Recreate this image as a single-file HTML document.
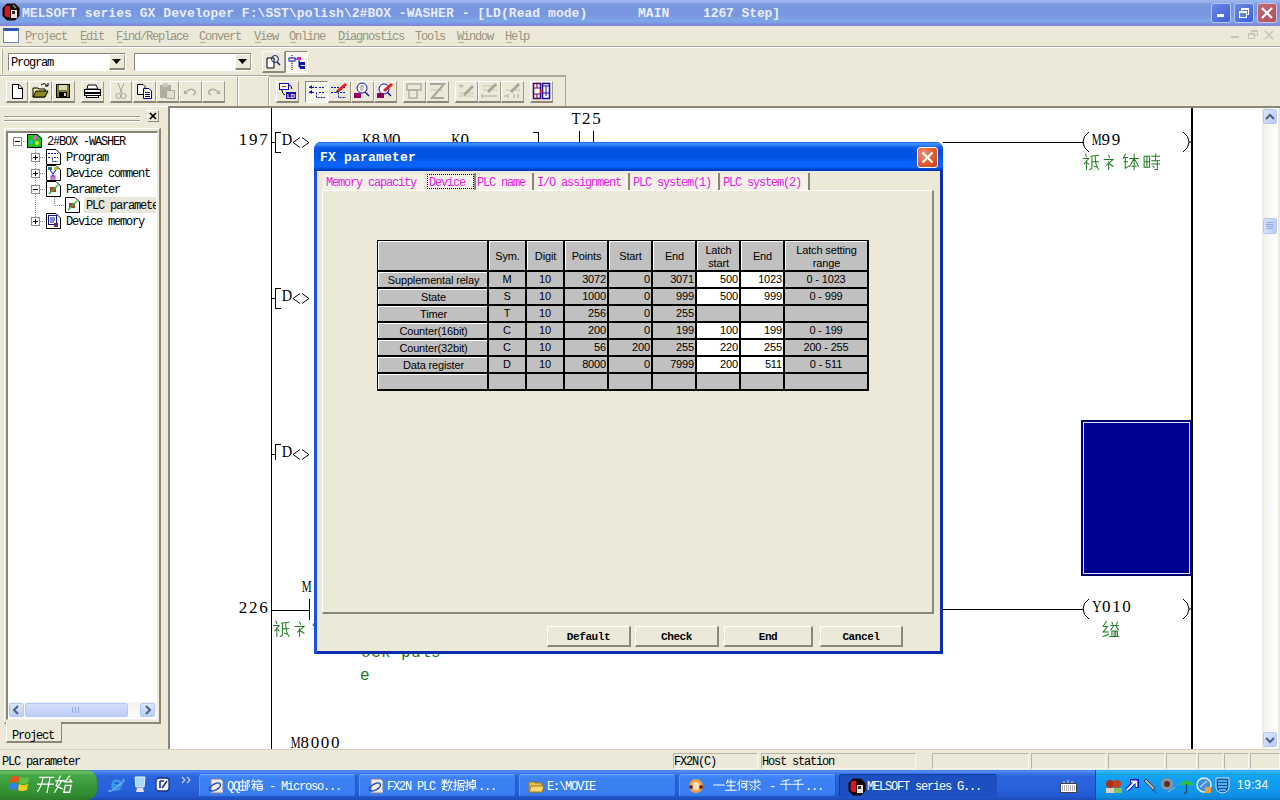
<!DOCTYPE html>
<html><head><meta charset="utf-8">
<style>
*{margin:0;padding:0;box-sizing:border-box}
html,body{width:1280px;height:800px;overflow:hidden;background:#ECE9D8;font-family:"Liberation Sans",sans-serif;position:relative}
div,span,svg{position:absolute}
.mono{font-family:"Liberation Mono",monospace;white-space:pre}
.ser{font-family:"Liberation Serif",serif;white-space:pre}
.tb{border-top:1px solid #FFFFFF;border-left:1px solid #FFFFFF;border-right:1px solid #9D9A8B;border-bottom:2px solid #8A8778;background:#ECE9D8}
.sunk{border-top:1px solid #8A8778;border-left:1px solid #8A8778;border-right:1px solid #fff;border-bottom:1px solid #fff}
.mi{top:30px;font-size:12px;color:#97947F;letter-spacing:-1.2px}
.gl{background:#000}
.grn{color:#1F7A1F}
</style></head><body>

<!-- TITLE BAR -->
<div style="left:0;top:0;width:1280px;height:26px;background:linear-gradient(#9AB5EF 0,#98B3EE 2px,#7E9CDD 4px,#7896DF 7px,#7A96E0 15px,#7BA0E4 18px,#7AA8E8 21px,#7C9AE4 23px,#7E88DA 25px,#7E86D8 26px)"></div>
<svg style="left:2px;top:3px" width="18" height="18"><path d="M5 0.5H13L17.5 5V13L13 17.5H5L0.5 13V5Z" fill="#1A0808"/><path d="M3 4Q5 2 8 3V14Q4 15 2.5 12Z" fill="#D81818"/><path d="M9 7H15V15H9Z" fill="#E8E0D8"/><path d="M10 8H13V11H10Z" fill="#402828"/><path d="M11 2L14 5" stroke="#60A060" stroke-width="1.5"/></svg>
<span class="mono" style="left:22px;top:6px;font-size:13px;font-weight:bold;color:#E8EEFA;letter-spacing:0.05px">MELSOFT series GX Developer F:\SST\polish\2#BOX -WASHER - [LD(Read mode)</span>
<span class="mono" style="left:638px;top:6px;font-size:13px;font-weight:bold;color:#E8EEFA;letter-spacing:0.05px">MAIN</span>
<span class="mono" style="left:703px;top:6px;font-size:13px;font-weight:bold;color:#E8EEFA;letter-spacing:-0.1px">1267 Step]</span>
<!-- title buttons -->
<div style="left:1211px;top:3px;width:20px;height:20px;border-radius:3px;border:1px solid #B4C6F2;background:linear-gradient(135deg,#6A88E6,#3E60D8)"></div>
<div style="left:1217px;top:14px;width:7px;height:3px;background:#fff"></div>
<div style="left:1234px;top:3px;width:20px;height:20px;border-radius:3px;border:1px solid #B4C6F2;background:linear-gradient(135deg,#6A88E6,#3E60D8)"></div>
<div style="left:1241px;top:8px;width:8px;height:7px;border:1px solid #fff;border-top-width:2px"></div>
<div style="left:1239px;top:11px;width:8px;height:7px;border:1px solid #fff;border-top-width:2px;background:#5F85DF"></div>
<div style="left:1257px;top:3px;width:20px;height:20px;border-radius:3px;border:1px solid #D8C0D8;background:linear-gradient(135deg,#C06A78,#B05060)"></div>
<svg style="left:1257px;top:3px" width="20" height="20"><path d="M5 5L15 15M15 5L5 15" stroke="#fff" stroke-width="2.2"/></svg>

<!-- MENU BAR -->
<div style="left:3px;top:28px;width:16px;height:15px;border:1px solid #6D83B8;border-top:3px solid #2E55B5;background:#fff"></div>
<span class="mono mi" style="left:25px">Project</span>
<span class="mono mi" style="left:80px">Edit</span>
<span class="mono mi" style="left:116px">Find/Replace</span>
<span class="mono mi" style="left:199px">Convert</span>
<span class="mono mi" style="left:254px">View</span>
<span class="mono mi" style="left:289px">Online</span>
<span class="mono mi" style="left:338px">Diagnostics</span>
<span class="mono mi" style="left:415px">Tools</span>
<span class="mono mi" style="left:457px">Window</span>
<span class="mono mi" style="left:505px">Help</span>
<div style="left:26px;top:42px;width:6px;height:1px;background:#B5B2A0"></div>
<div style="left:81px;top:42px;width:6px;height:1px;background:#B5B2A0"></div>
<div style="left:117px;top:42px;width:6px;height:1px;background:#B5B2A0"></div>
<div style="left:200px;top:42px;width:6px;height:1px;background:#B5B2A0"></div>
<div style="left:255px;top:42px;width:6px;height:1px;background:#B5B2A0"></div>
<div style="left:290px;top:42px;width:6px;height:1px;background:#B5B2A0"></div>
<div style="left:339px;top:42px;width:6px;height:1px;background:#B5B2A0"></div>
<div style="left:416px;top:42px;width:6px;height:1px;background:#B5B2A0"></div>
<div style="left:458px;top:42px;width:6px;height:1px;background:#B5B2A0"></div>
<div style="left:506px;top:42px;width:6px;height:1px;background:#B5B2A0"></div>
<!-- mdi buttons -->
<div style="left:1231px;top:36px;width:8px;height:2px;background:#C9C6B8"></div>
<div style="left:1251px;top:30px;width:7px;height:6px;border:1px solid #C9C6B8;border-top-width:2px"></div><div style="left:1248px;top:33px;width:7px;height:6px;border:1px solid #C9C6B8;border-top-width:2px;background:#ECE9D8"></div>
<svg style="left:1264px;top:30px" width="10" height="10"><path d="M1 1L9 9M9 1L1 9" stroke="#C9C6B8" stroke-width="1.6"/></svg>
<div style="left:0;top:46px;width:1280px;height:1px;background:#ACA899"></div>
<div style="left:0;top:47px;width:1280px;height:1px;background:#fff"></div>

<!-- TOOLBAR ROW 1 -->
<div style="left:1px;top:49px;width:2px;height:25px;border-left:1px solid #fff;border-right:1px solid #ACA899"></div>
<div class="sunk" style="left:8px;top:53px;width:118px;height:18px;background:#fff"></div>
<span class="mono" style="left:11px;top:56px;font-size:12px;letter-spacing:-1.2px;color:#000">Program</span>
<div class="tb" style="left:109px;top:54px;width:16px;height:16px"></div>
<svg style="left:112px;top:59px" width="10" height="6"><path d="M0 0H9L4.5 5Z" fill="#000"/></svg>
<div class="sunk" style="left:134px;top:53px;width:118px;height:18px;background:#fff"></div>
<div class="tb" style="left:235px;top:54px;width:16px;height:16px"></div>
<svg style="left:238px;top:59px" width="10" height="6"><path d="M0 0H9L4.5 5Z" fill="#000"/></svg>
<div class="tb" style="left:262px;top:51px;width:23px;height:22px"></div>
<svg style="left:264px;top:53px" width="19" height="18"><path d="M3 5H10V15H3Z" fill="#fff" stroke="#000"/><circle cx="11" cy="6" r="3.5" fill="none" stroke="#1a1a80"/><path d="M13 9L16 12" stroke="#1a1a80" stroke-width="1.5"/></svg>
<div style="left:285px;top:51px;width:23px;height:22px;border-top:1px solid #8A8778;border-left:1px solid #8A8778;border-right:1px solid #fff;border-bottom:1px solid #fff;background:#F6F5EE"></div>
<svg style="left:287px;top:53px" width="19" height="18"><path d="M5 2V17" stroke="#000" stroke-dasharray="1 1"/><rect x="2" y="5" width="6" height="3" fill="#fff" stroke="#1010C0"/><rect x="10" y="4" width="4" height="3" fill="#E020C0"/><path d="M8 6H10M12 7V14H14" stroke="#1010C0"/><rect x="13" y="9" width="5" height="3" fill="#1010C0"/><rect x="13" y="13" width="5" height="3" fill="#1010C0"/></svg>
<div style="left:0;top:75px;width:566px;height:1px;background:#ACA899"></div>
<div style="left:0;top:76px;width:566px;height:1px;background:#fff"></div>
<style>
.tab{top:176px;font-size:12px;letter-spacing:-1.2px;color:#E41EE4}
.dbtn{border-top:1px solid #fff;border-left:1px solid #fff;border-right:2px solid #8A8778;border-bottom:2px solid #8A8778;background:#ECE9D8;font-family:"Liberation Mono",monospace;font-size:11px;font-weight:bold;letter-spacing:-0.4px;text-align:center;line-height:20px;color:#000}
.cell{position:absolute;font-size:11px;line-height:15px;color:#000;white-space:nowrap;letter-spacing:-0.15px}
</style>
<style>
.sp{top:753px;height:16px;border-top:1px solid #B8B5A6;border-left:1px solid #B8B5A6;border-right:1px solid #F8F7F2;border-bottom:1px solid #F8F7F2}
.tbtn{top:774px;width:157px;height:23px;border-radius:3px;background:linear-gradient(#4A8EF8 0,#3C82F4 3px,#3A7EF2 18px,#3372E6 23px);border-top:1px solid #6AA2FA;border-left:1px solid #5A96F6;border-right:1px solid #2058C8;border-bottom:1px solid #2058C8}
.tt{top:780px;font-size:12px;color:#fff;letter-spacing:-1.2px}
</style>
<style>.lt{font-family:"Liberation Serif",serif;font-size:17px;letter-spacing:1.5px;white-space:pre;color:#000;line-height:17px}</style>
<style>.tr{font-size:12px;letter-spacing:-1.2px;color:#000}</style>
<style>.lc{width:10.2px;text-align:center;font-family:"Liberation Serif",serif;font-size:17px;line-height:17px;color:#000}.lc i{font-style:normal;display:block}</style>
<!-- TOOLBAR ROW 2 -->

<div class="tb" style="left:6px;top:81px;width:22px;height:22px"></div>
<svg style="left:6px;top:80px" width="22" height="22"><path d="M6.5 4.5H13L16.5 8V18.5H6.5Z" fill="#fff" stroke="#000"/><path d="M12.5 4.5V8.5H16.5" fill="none" stroke="#000"/></svg>
<div class="tb" style="left:29px;top:81px;width:23px;height:22px"></div>
<svg style="left:29px;top:80px" width="23" height="22"><path d="M4 8H9L10 9H16V17H4Z" fill="#F4F094" stroke="#000"/><path d="M4 17L7 11H19L16 17Z" fill="#8A8A20" stroke="#000"/><path d="M12 5Q16 2 18 6" fill="none" stroke="#000"/><path d="M16 6H19V3" fill="none" stroke="#000"/></svg>
<div class="tb" style="left:52px;top:81px;width:23px;height:22px"></div>
<svg style="left:52px;top:80px" width="23" height="22"><rect x="4.5" y="4.5" width="13" height="13" fill="#80802a" stroke="#000"/><rect x="7" y="5" width="8" height="5" fill="#D8D8B0"/><rect x="7" y="12" width="8" height="5" fill="#000"/><rect x="12" y="13" width="2" height="3" fill="#D8D8B0"/></svg>
<div class="tb" style="left:81px;top:81px;width:23px;height:22px"></div>
<svg style="left:81px;top:80px" width="23" height="22"><path d="M7 5H15L17 9H6Z" fill="#fff" stroke="#000"/><rect x="3.5" y="9.5" width="16" height="6" fill="#fff" stroke="#000"/><rect x="4" y="12" width="15" height="2" fill="#000"/><rect x="5.5" y="15.5" width="12" height="2" fill="#fff" stroke="#000"/></svg>
<div class="tb" style="left:110px;top:81px;width:22px;height:22px"></div>
<svg style="left:110px;top:80px" width="22" height="22"><path d="M8 3L12 13M14 3L10 13" stroke="#A8A698" fill="none"/><circle cx="8.5" cy="16" r="2.5" fill="none" stroke="#A8A698"/><circle cx="13.5" cy="16" r="2.5" fill="none" stroke="#A8A698"/></svg>
<div class="tb" style="left:133px;top:81px;width:23px;height:22px"></div>
<svg style="left:133px;top:80px" width="23" height="22"><path d="M4.5 4.5H10L12 6.5V14.5H4.5Z" fill="#fff" stroke="#000"/><path d="M10.5 8.5H16L18.5 11V18.5H10.5Z" fill="#fff" stroke="#000080"/><path d="M12 12.5H17M12 14.5H17M12 16.5H17" stroke="#000080" shape-rendering="crispEdges"/></svg>
<div class="tb" style="left:156px;top:81px;width:23px;height:22px"></div>
<svg style="left:156px;top:80px" width="23" height="22"><rect x="4" y="5" width="11" height="13" fill="#B0AE9E"/><rect x="7" y="3" width="5" height="4" fill="#C8C6B8"/><path d="M10.5 10.5H18.5V18.5H10.5Z" fill="#E0DED0" stroke="#A8A698"/></svg>
<div class="tb" style="left:179px;top:81px;width:23px;height:22px"></div>
<svg style="left:179px;top:80px" width="23" height="22"><path d="M7 12Q12 7 16 11Q17 14 14 15" fill="none" stroke="#B0AE9E" stroke-width="1.5"/><path d="M5 10V14H9Z" fill="#B0AE9E"/></svg>
<div class="tb" style="left:202px;top:81px;width:23px;height:22px"></div>
<svg style="left:202px;top:80px" width="23" height="22"><path d="M16 12Q11 7 7 11Q6 14 9 15" fill="none" stroke="#B0AE9E" stroke-width="1.5"/><path d="M18 10V14H14Z" fill="#B0AE9E"/></svg>
<div style="left:237px;top:77px;width:1px;height:29px;background:#ACA899"></div>
<div style="left:238px;top:77px;width:1px;height:29px;background:#fff"></div>
<div style="left:268px;top:77px;width:1px;height:29px;background:#ACA899"></div>
<div style="left:269px;top:77px;width:1px;height:29px;background:#fff"></div>
<div style="left:565px;top:77px;width:1px;height:29px;background:#ACA899"></div>
<div style="left:269px;top:76px;width:297px;height:1px;background:#ACA899"></div>

<div class="tb" style="left:276px;top:81px;width:23px;height:22px"></div>
<svg style="left:276px;top:80px" width="23" height="22"><rect x="3.5" y="3.5" width="9" height="6" fill="#fff" stroke="#1010B0"/><path d="M6 6.5H10" stroke="#E02020"/><path d="M13 5Q16 6 16 9M6 10Q6 14 9 15" fill="none" stroke="#000"/><rect x="10" y="12" width="10" height="7" fill="#1010A0"/><text x="11" y="18" font-size="6" fill="#fff" font-family="Liberation Sans" font-weight="bold">LD</text></svg>
<div style="left:305px;top:81px;width:23px;height:22px;border-top:1px solid #8A8778;border-left:1px solid #8A8778;border-right:1px solid #fff;border-bottom:1px solid #fff;background:#F6F5EE"></div>
<svg style="left:305px;top:80px" width="23" height="22"><path d="M4 7.5H12M14 7.5H20M4 12.5H10M11.5 12.5V17.5H20M14 12.5H20" stroke="#1010C0" stroke-dasharray="2 1" fill="none"/><path d="M4 7L7 5V9Z M4 12L7 10V14Z" fill="#1010C0"/></svg>
<div class="tb" style="left:328px;top:81px;width:23px;height:22px"></div>
<svg style="left:328px;top:80px" width="23" height="22"><path d="M3 7.5H18M3 12.5H9M10.5 12.5V17.5H18M12 12.5H18" stroke="#1010C0" stroke-dasharray="2 1" fill="none"/><path d="M9 10L17 3L19 5L11 12Z" fill="#E02020"/><path d="M9 10L8 13L11 12Z" fill="#000"/></svg>
<div class="tb" style="left:351px;top:81px;width:23px;height:22px"></div>
<svg style="left:351px;top:80px" width="23" height="22"><circle cx="11" cy="8" r="5" fill="#fff" stroke="#1010A0"/><path d="M14 12L18 16" stroke="#1010A0" stroke-width="1.5"/><path d="M9 6H13M9 8H13M9 10H12" stroke="#888"/><rect x="3" y="13" width="7" height="5" fill="#900060"/></svg>
<div class="tb" style="left:374px;top:81px;width:23px;height:22px"></div>
<svg style="left:374px;top:80px" width="23" height="22"><circle cx="10" cy="9" r="5" fill="#fff" stroke="#1010A0"/><path d="M13 12L17 16" stroke="#1010A0" stroke-width="1.5"/><path d="M9 10L17 3L19 5L11 12Z" fill="#E02020"/><rect x="3" y="13" width="7" height="5" fill="#900060"/></svg>
<div class="tb" style="left:403px;top:81px;width:23px;height:22px"></div>
<svg style="left:403px;top:80px" width="23" height="22"><rect x="4" y="4" width="14" height="6" fill="none" stroke="#B0AE9E" stroke-width="1.5"/><rect x="6" y="10" width="8" height="8" fill="none" stroke="#B0AE9E" stroke-width="1.5"/></svg>
<div class="tb" style="left:426px;top:81px;width:23px;height:22px"></div>
<svg style="left:426px;top:80px" width="23" height="22"><path d="M4 4H18L6 18H18" fill="none" stroke="#A8A698" stroke-width="2"/><path d="M5 10H17" stroke="#B0AE9E" stroke-dasharray="2 1"/></svg>
<div class="tb" style="left:455px;top:81px;width:23px;height:22px"></div>
<svg style="left:455px;top:80px" width="23" height="22"><path d="M4 13H19M4 16H19" stroke="#B0AE9E" stroke-dasharray="1.5 1"/><path d="M8 14L17 5L19 7L10 16Z" fill="#A8A698"/><path d="M4 6H9M6 4V8" stroke="#B0AE9E"/></svg>
<div class="tb" style="left:478px;top:81px;width:23px;height:22px"></div>
<svg style="left:478px;top:80px" width="23" height="22"><path d="M5 6H19M5 10H19" stroke="#B0AE9E" stroke-dasharray="1.5 1"/><path d="M9 11L17 3L19 5L11 13Z" fill="#A8A698"/><path d="M4 14V18M4 16H19" stroke="#A8A698"/></svg>
<div class="tb" style="left:501px;top:81px;width:23px;height:22px"></div>
<svg style="left:501px;top:80px" width="23" height="22"><path d="M5 10H19" stroke="#B0AE9E" stroke-dasharray="1.5 1"/><path d="M9 11L17 3L19 5L11 13Z" fill="#A8A698"/><path d="M3 16H6M8 14L6 16L8 18M12 14L14 16L12 18M17 14V18" stroke="#A8A698" fill="none"/></svg>
<div class="tb" style="left:530px;top:81px;width:23px;height:22px"></div>
<svg style="left:530px;top:80px" width="23" height="22"><rect x="3.5" y="3.5" width="7" height="15" fill="#fff" stroke="#500060" stroke-width="1.5"/><path d="M4 8H10M4 14H10M7 4V8M7 14V18" stroke="#500060"/><rect x="12.5" y="3.5" width="7" height="15" fill="#fff" stroke="#1010B0" stroke-width="1.5"/><path d="M13 6H19M16 6V16M13 13H19" stroke="#1010B0"/><path d="M10 10L14 11L10 13Z" fill="#E02020"/></svg>
<div style="left:0;top:106px;width:168px;height:1px;background:#FFFFFF"></div>
<!-- LEFT PANEL -->
<div style="left:4px;top:116px;width:136px;height:2px;border-top:1px solid #9D9A8B;border-bottom:1px solid #fff"></div>
<div style="left:4px;top:120px;width:136px;height:2px;border-top:1px solid #9D9A8B;border-bottom:1px solid #fff"></div>
<div style="left:147px;top:110px;width:12px;height:12px;border-top:1px solid #fff;border-left:1px solid #fff;border-right:1px solid #8A8778;border-bottom:1px solid #8A8778"></div>
<svg style="left:148px;top:111px" width="10" height="10"><path d="M2 2L8 8M8 2L2 8" stroke="#000" stroke-width="1.7"/></svg>
<!-- tab page frame -->
<div style="left:4px;top:128px;width:157px;height:596px;border-top:1px solid #fff;border-left:1px solid #fff;border-right:2px solid #8A8778;border-bottom:2px solid #8A8778"></div>
<!-- tree box -->
<div style="left:6px;top:131px;width:152px;height:589px;border-top:2px solid #8A8778;border-left:2px solid #8A8778;border-right:1px solid #F0EEE4;border-bottom:1px solid #F0EEE4;background:#fff"></div>
<!-- tree lines -->
<svg style="left:0;top:0" width="170" height="240"><g stroke="#909090" fill="none" stroke-dasharray="1 1">
<path d="M21 141.5H27M35.5 148V222M40 157.5H46M40 173.5H46M40 189.5H46M40 221.5H46M54.5 197V205M55 205.5H65"/>
</g></svg>
<!-- expanders -->
<div style="left:13px;top:137px;width:9px;height:9px;border:1px solid #8A8A8A;background:#fff"></div><div style="left:15px;top:141px;width:5px;height:1px;background:#000"></div>
<div style="left:31px;top:153px;width:9px;height:9px;border:1px solid #8A8A8A;background:#fff"></div><div style="left:33px;top:157px;width:5px;height:1px;background:#000"></div><div style="left:35px;top:155px;width:1px;height:5px;background:#000"></div>
<div style="left:31px;top:169px;width:9px;height:9px;border:1px solid #8A8A8A;background:#fff"></div><div style="left:33px;top:173px;width:5px;height:1px;background:#000"></div><div style="left:35px;top:171px;width:1px;height:5px;background:#000"></div>
<div style="left:31px;top:185px;width:9px;height:9px;border:1px solid #8A8A8A;background:#fff"></div><div style="left:33px;top:189px;width:5px;height:1px;background:#000"></div>
<div style="left:31px;top:217px;width:9px;height:9px;border:1px solid #8A8A8A;background:#fff"></div><div style="left:33px;top:221px;width:5px;height:1px;background:#000"></div><div style="left:35px;top:219px;width:1px;height:5px;background:#000"></div>
<!-- icons -->
<svg style="left:27px;top:134px" width="15" height="14"><path d="M0.5 0.5H10L14.5 4V13.5H0.5Z" fill="#20C020" stroke="#000"/><circle cx="8" cy="4" r="2" fill="#E060E0"/><circle cx="4" cy="8" r="2" fill="#20C0E0"/><circle cx="10" cy="9" r="2" fill="#E0E020"/></svg>
<svg style="left:46px;top:149px" width="15" height="16"><path d="M0.5 0.5H10L14.5 5V15.5H0.5Z" fill="#fff" stroke="#000"/><path d="M2 4.5H12M2 8.5H5M6.5 8.5V12.5H12M8 8.5H12" stroke="#1010C0" stroke-dasharray="2 1" fill="none"/></svg>
<svg style="left:46px;top:165px" width="15" height="16"><path d="M0.5 0.5H10L14.5 5V15.5H0.5Z" fill="#fff" stroke="#000"/><rect x="2" y="2" width="4" height="3" fill="#208080"/><rect x="8" y="2" width="4" height="3" fill="#C0C020"/><path d="M4 5L7 9L10 5M7 9V13" stroke="#1010C0" fill="none"/><rect x="5" y="11" width="4" height="3" fill="none" stroke="#A020A0"/></svg>
<svg style="left:46px;top:181px" width="15" height="16"><path d="M0.5 0.5H10L14.5 5V15.5H0.5Z" fill="#fff" stroke="#000"/><rect x="4" y="6" width="6" height="5" fill="#A04040"/><path d="M3 13L12 4" stroke="#30C030" stroke-width="1.5"/></svg>
<div style="left:84px;top:197px;width:72px;height:16px;background:#E8E6DA"></div>
<svg style="left:65px;top:197px" width="15" height="16"><path d="M0.5 0.5H10L14.5 5V15.5H0.5Z" fill="#fff" stroke="#000"/><rect x="4" y="6" width="6" height="5" fill="#A04040"/><path d="M3 13L12 4" stroke="#30C030" stroke-width="1.5"/></svg>
<svg style="left:46px;top:213px" width="15" height="16"><path d="M0.5 0.5H10L14.5 5V15.5H0.5Z" fill="#fff" stroke="#000"/><rect x="2.5" y="2.5" width="8" height="9" fill="#fff" stroke="#1010A0"/><path d="M4 5H9M4 7H9M4 9H8" stroke="#1010A0"/><rect x="8" y="10" width="4" height="4" fill="#603060"/></svg>
<!-- tree text -->
<span class="mono tr" style="left:47px;top:135px">2#BOX -WASHER</span>
<span class="mono tr" style="left:66px;top:151px">Program</span>
<span class="mono tr" style="left:66px;top:167px">Device comment</span>
<span class="mono tr" style="left:66px;top:183px">Parameter</span>
<div style="left:84px;top:197px;width:72px;height:16px;overflow:hidden"><span class="mono tr" style="left:2px;top:2px">PLC parameter</span></div>
<span class="mono tr" style="left:66px;top:215px">Device memory</span>
<!-- h scrollbar -->
<div style="left:8px;top:702px;width:149px;height:16px;background:linear-gradient(#F4F3EE,#FCFCFA)"></div>
<div style="left:9px;top:703px;width:15px;height:14px;border:1px solid #B6C8F2;border-radius:2px;background:linear-gradient(#DCE6FC,#BCCDF5)"></div>
<svg style="left:9px;top:703px" width="15" height="14"><path d="M9 3L5 7L9 11" stroke="#4D6185" stroke-width="2" fill="none"/></svg>
<div style="left:25px;top:703px;width:103px;height:14px;border:1px solid #B6C8F2;border-radius:2px;background:linear-gradient(#D3DEFB,#BCCDF5)"></div>
<div style="left:72px;top:707px;width:7px;height:6px;border-left:1px solid #8FA8E0;border-right:1px solid #8FA8E0;background:linear-gradient(90deg,transparent 2px,#8FA8E0 2px,#8FA8E0 3px,transparent 3px)"></div>
<div style="left:140px;top:703px;width:15px;height:14px;border:1px solid #B6C8F2;border-radius:2px;background:linear-gradient(#DCE6FC,#BCCDF5)"></div>
<svg style="left:140px;top:703px" width="15" height="14"><path d="M6 3L10 7L6 11" stroke="#4D6185" stroke-width="2" fill="none"/></svg>
<!-- tab -->
<div style="left:6px;top:722px;width:56px;height:21px;border-left:1px solid #fff;border-right:1px solid #8A8778;border-bottom:2px solid #8A8778;background:#ECE9D8"></div>
<span class="mono tr" style="left:12px;top:729px">Project</span>

<!-- SPLITTER / MDI FRAME -->
<div style="left:168px;top:106px;width:1112px;height:644px;border-top:2px solid #8A8778;border-left:2px solid #8A8778"></div>
<div style="left:170px;top:108px;width:1092px;height:641px;background:#fff"></div>
<!-- v scrollbar -->
<div style="left:1262px;top:108px;width:16px;height:641px;background:linear-gradient(90deg,#EEEDE5,#F7F6F1 40%,#FFFFFF)"></div>
<div style="left:1263px;top:109px;width:14px;height:15px;border:1px solid #B6C8F2;border-radius:2px;background:linear-gradient(135deg,#DCE6FC,#B8CAF4)"></div>
<svg style="left:1263px;top:109px" width="14" height="15"><path d="M3 10L7 6L11 10" stroke="#4D6185" stroke-width="2" fill="none"/></svg>
<div style="left:1263px;top:218px;width:14px;height:16px;border:1px solid #B6C8F2;border-radius:2px;background:linear-gradient(90deg,#D6E1FB,#BCCDF5)"></div>
<div style="left:1266px;top:222px;width:7px;height:7px;background:repeating-linear-gradient(#8FA8E0 0 1px,transparent 1px 2px)"></div>
<div style="left:1263px;top:732px;width:14px;height:15px;border:1px solid #B6C8F2;border-radius:2px;background:linear-gradient(135deg,#DCE6FC,#B8CAF4)"></div>
<svg style="left:1263px;top:732px" width="14" height="15"><path d="M3 6L7 10L11 6" stroke="#4D6185" stroke-width="2" fill="none"/></svg>
<!-- LADDER -->
<span class="lc" style="left:237.9px;top:131px"><i>1</i></span><span class="lc" style="left:248.1px;top:131px"><i>9</i></span><span class="lc" style="left:258.3px;top:131px"><i>7</i></span>
<span class="lc" style="left:280.9px;top:131px"><i style="transform:scaleX(0.85)">D</i></span>
<span class="lc" style="left:280.9px;top:287px"><i style="transform:scaleX(0.85)">D</i></span>
<span class="lc" style="left:280.9px;top:443px"><i style="transform:scaleX(0.85)">D</i></span>
<span class="lc" style="left:570.9px;top:110px"><i style="transform:scaleX(0.85)">T</i></span><span class="lc" style="left:581.1px;top:110px"><i>2</i></span><span class="lc" style="left:591.3px;top:110px"><i>5</i></span>
<span class="lc" style="left:1090.4px;top:131px"><i style="transform:scaleX(0.65)">M</i></span><span class="lc" style="left:1100.6px;top:131px"><i>9</i></span><span class="lc" style="left:1110.8px;top:131px"><i>9</i></span>
<span class="lc" style="left:1090.9px;top:598px"><i style="transform:scaleX(0.75)">Y</i></span><span class="lc" style="left:1101.1px;top:598px"><i>0</i></span><span class="lc" style="left:1111.3px;top:598px"><i>1</i></span><span class="lc" style="left:1121.5px;top:598px"><i>0</i></span>
<span class="lc" style="left:237.9px;top:599px"><i>2</i></span><span class="lc" style="left:248.1px;top:599px"><i>2</i></span><span class="lc" style="left:258.3px;top:599px"><i>6</i></span>
<span class="lc" style="left:289.4px;top:734px"><i style="transform:scaleX(0.65)">M</i></span><span class="lc" style="left:299.6px;top:734px"><i>8</i></span><span class="lc" style="left:309.8px;top:734px"><i>0</i></span><span class="lc" style="left:320.0px;top:734px"><i>0</i></span><span class="lc" style="left:330.2px;top:734px"><i>0</i></span>
<div class="gl" style="left:271px;top:108px;width:1px;height:641px"></div>
<div class="gl" style="left:1191px;top:108px;width:2px;height:641px"></div>
<!-- brackets rows -->
<svg style="left:271px;top:130px" width="45" height="330"><g stroke="#000" fill="none">
<path d="M0 12.5H4.5M4.5 2V22M4 2.5H10M4 22.5H10"/>
<path d="M0 168.5H4.5M4.5 158V178M4 158.5H10M4 178.5H10"/>
<path d="M0 324.5H4.5M4.5 314V334M4 314.5H10M4 334.5H10"/>
<path d="M29 7.5L22 12.5L29 17.5M31 7.5L38 12.5L31 17.5"/>
<path d="M29 163.5L22 168.5L29 173.5M31 163.5L38 168.5L31 173.5"/>
<path d="M29 319.5L22 324.5L29 329.5M31 319.5L38 324.5L31 329.5"/>
</g></svg>
<div style="left:300px;top:120px;width:340px;height:22px;overflow:hidden">
<span class="lc" style="left:60.5px;top:11px"><i style="transform:scaleX(0.75)">K</i></span><span class="lc" style="left:70.7px;top:11px"><i>8</i></span><span class="lc" style="left:80.9px;top:11px"><i style="transform:scaleX(0.65)">M</i></span><span class="lc" style="left:91.1px;top:11px"><i>0</i></span><span class="lc" style="left:149.5px;top:11px"><i style="transform:scaleX(0.75)">K</i></span><span class="lc" style="left:159.7px;top:11px"><i>0</i></span>
<div class="gl" style="left:238px;top:12px;width:1px;height:12px"></div>
<div class="gl" style="left:233px;top:12px;width:6px;height:1px"></div>
<div class="gl" style="left:279px;top:11px;width:1px;height:12px"></div>
<div class="gl" style="left:293px;top:11px;width:1px;height:12px"></div>
</div>
<div class="gl" style="left:943px;top:142px;width:141px;height:1px"></div>
<svg style="left:1080px;top:130px" width="112" height="24"><path d="M9 2Q3 6 3 12Q3 18 9 22M103 2Q109 6 109 12Q109 18 103 22" stroke="#000" fill="none"/><path d="M109 12H112" stroke="#000"/></svg>
<!-- green jp text M99 -->
<svg style="left:1081px;top:152px" width="83" height="22"><g stroke="#1F7A1F" fill="none" stroke-width="0.91" stroke-linecap="square"><path transform="translate(1.0 1.0) scale(1.1)" d="M3 1L4 3M1 5H6L2 10M4 7V15M5 9L6 10M8 3L15 2M9 3V14L7 15M9 8H15M12 3Q12 11 15 15M11 12L14 13"/><path transform="translate(21.0 1.0) scale(1.1)" d="M6 2L7 4M2 6H10L4 11M6 8V15M7 10L10 12"/><path transform="translate(41.0 1.0) scale(1.1)" d="M3 1L1 5M2 4H5M2 8H5M3 4V14L6 12 M7 5H15M11 1V15M11 5L7 12M11 5L15 12M9 12H13"/><path transform="translate(62.0 1.0) scale(1.1)" d="M1 3H6V13H1ZM1 8H6M3.5 3V13 M8 3H15M11.5 1V7M8 7H15M8 10H15M13 7V15L11 15M9 12L10 13"/></g></svg>
<!-- row 3 box -->
<div style="left:1081px;top:420px;width:111px;height:156px;background:#000090;border:1px solid #000060"></div>
<div style="left:1083px;top:422px;width:107px;height:152px;border:1px solid #E8E8F8"></div>
<!-- row 4 -->
<div class="gl" style="left:272px;top:610px;width:38px;height:1px"></div>
<div class="gl" style="left:309px;top:599px;width:1px;height:21px"></div>
<div style="left:296px;top:575px;width:18px;height:22px;overflow:hidden"><span class="lc" style="left:3.9px;top:3px"><i style="transform:scaleX(0.65)">M</i></span></div>
<svg style="left:271px;top:619px" width="62" height="22"><g stroke="#1F7A1F" fill="none" stroke-width="0.91" stroke-linecap="square"><path transform="translate(1.5 1.0) scale(1.1)" d="M3 1L4 3M1 5H6L2 10M4 7V15M5 9L6 10M8 3L15 2M9 3V14L7 15M9 8H15M12 3Q12 11 15 15M11 12L14 13"/><path transform="translate(22.0 1.0) scale(1.1)" d="M6 2L7 4M2 6H10L4 11M6 8V15M7 10L10 12"/><path transform="translate(41.0 1.0) scale(1.1)" d="M3 1L1 5M2 4H5M2 8H5M3 4V14L6 12 M7 5H15M11 1V15M11 5L7 12M11 5L15 12M9 12H13"/></g></svg>
<div class="gl" style="left:943px;top:609px;width:141px;height:1px"></div>
<svg style="left:1080px;top:597px" width="112" height="24"><path d="M9 2Q3 6 3 12Q3 18 9 22M103 2Q109 6 109 12Q109 18 103 22" stroke="#000" fill="none"/><path d="M109 12H112" stroke="#000"/></svg>
<svg style="left:1101px;top:619px" width="22" height="22"><g stroke="#1F7A1F" fill="none" stroke-width="0.91" stroke-linecap="square"><path transform="translate(1.0 1.0) scale(1.1)" d="M4 1L1 6H5L1 11H6M1 15L6 13 M9 2L10 4M14 2L13 4M8 5H15M10 6L8 9M13 6L15 9M9 10H14V15H9ZM11 10V15M12.5 10V15M7 15H15"/></g></svg>
<div style="left:330px;top:653px;width:150px;height:40px;overflow:hidden"><span class="mono grn" style="left:31px;top:-9px;font-size:16px;letter-spacing:0.4px">ock puls</span></div>
<span class="mono grn" style="left:360px;top:667px;font-size:16px;letter-spacing:-0.5px">e</span>
<!-- DIALOG -->
<div style="left:314px;top:142px;width:629px;height:512px;background:#0A2CAE;border-left:3px solid #1A50DC;border-radius:7px 7px 0 0"></div>
<div style="left:314px;top:142px;width:629px;height:29px;border-radius:7px 7px 0 0;background:linear-gradient(#0A3CC0 0,#3D8EFF 1px,#3585FB 3px,#0F60EA 5px,#0053E0 8px,#0054E2 16px,#0A62F8 19px,#0864FC 25px,#0044CC 27px,#0036B0 29px)"></div>
<div style="left:317px;top:171px;width:623px;height:480px;background:#ECE9D8;border-top:1px solid #E4ECFA"></div>
<span class="mono" style="left:320px;top:150px;font-size:13px;font-weight:bold;color:#fff;letter-spacing:0.2px">FX parameter</span>
<div style="left:917px;top:147px;width:21px;height:21px;border:1px solid #fff;border-radius:3px;background:radial-gradient(circle at 30% 30%,#F09070,#E05A30 55%,#C8401A)"></div>
<svg style="left:917px;top:147px" width="21" height="21"><path d="M5.5 5.5L15.5 15.5M15.5 5.5L5.5 15.5" stroke="#fff" stroke-width="2.2"/></svg>
<!-- tabs -->
<div style="left:323px;top:174px;width:101px;height:16px;background:#F3F1E8"></div>
<div style="left:427px;top:174px;width:47px;height:15px;background:#F3F1E8;border:1px dotted #000"></div>
<div style="left:476px;top:174px;width:57px;height:16px;background:#F3F1E8"></div>
<div style="left:535px;top:174px;width:94px;height:16px;background:#F3F1E8"></div>
<div style="left:631px;top:174px;width:88px;height:16px;background:#F3F1E8"></div>
<div style="left:721px;top:174px;width:88px;height:16px;background:#F3F1E8"></div>
<div style="left:474px;top:173px;width:2px;height:17px;background:#8A8778"></div>
<div style="left:532px;top:173px;width:2px;height:17px;background:#8A8778"></div>
<div style="left:628px;top:173px;width:2px;height:17px;background:#8A8778"></div>
<div style="left:718px;top:173px;width:2px;height:17px;background:#8A8778"></div>
<div style="left:808px;top:173px;width:2px;height:17px;background:#8A8778"></div>
<span class="mono tab" style="left:326px">Memory capacity</span>
<span class="mono tab" style="left:429px">Device</span>
<span class="mono tab" style="left:477px">PLC name</span>
<span class="mono tab" style="left:537px">I/O assignment</span>
<span class="mono tab" style="left:633px">PLC system(1)</span>
<span class="mono tab" style="left:723px">PLC system(2)</span>
<!-- tab panel -->
<div style="left:322px;top:190px;width:612px;height:424px;border-top:1px solid #fff;border-left:1px solid #fff;border-right:2px solid #8A8778;border-bottom:2px solid #8A8778"></div>
<!-- buttons -->
<div class="dbtn" style="left:547px;top:626px;width:84px;height:21px">Default</div>
<div class="dbtn" style="left:635px;top:626px;width:84px;height:21px">Check</div>
<div class="dbtn" style="left:724px;top:626px;width:89px;height:21px">End</div>
<div class="dbtn" style="left:820px;top:626px;width:83px;height:21px">Cancel</div>
<!-- TABLE -->
<div style="left:377px;top:240px;width:492px;height:151px;background:#000"></div>
<div class="cell" style="left:378px;top:241px;width:109px;height:29px;background:#C0C0C0;border-top:1px solid #fff;border-left:1px solid #fff;"></div>
<div class="cell" style="left:489px;top:241px;width:36px;height:29px;background:#C0C0C0;border-top:1px solid #fff;border-left:1px solid #fff;"><span style="left:0;width:35px;top:7px;text-align:center">Sym.</span></div>
<div class="cell" style="left:527px;top:241px;width:36px;height:29px;background:#C0C0C0;border-top:1px solid #fff;border-left:1px solid #fff;"><span style="left:0;width:35px;top:7px;text-align:center">Digit</span></div>
<div class="cell" style="left:565px;top:241px;width:42px;height:29px;background:#C0C0C0;border-top:1px solid #fff;border-left:1px solid #fff;"><span style="left:0;width:41px;top:7px;text-align:center">Points</span></div>
<div class="cell" style="left:609px;top:241px;width:42px;height:29px;background:#C0C0C0;border-top:1px solid #fff;border-left:1px solid #fff;"><span style="left:0;width:41px;top:7px;text-align:center">Start</span></div>
<div class="cell" style="left:653px;top:241px;width:42px;height:29px;background:#C0C0C0;border-top:1px solid #fff;border-left:1px solid #fff;"><span style="left:0;width:41px;top:7px;text-align:center">End</span></div>
<div class="cell" style="left:697px;top:241px;width:42px;height:29px;background:#C0C0C0;border-top:1px solid #fff;border-left:1px solid #fff;"><span style="left:0;width:41px;top:2px;text-align:center;line-height:13px">Latch<br>start</span></div>
<div class="cell" style="left:741px;top:241px;width:42px;height:29px;background:#C0C0C0;border-top:1px solid #fff;border-left:1px solid #fff;"><span style="left:0;width:41px;top:7px;text-align:center">End</span></div>
<div class="cell" style="left:785px;top:241px;width:82px;height:29px;background:#C0C0C0;border-top:1px solid #fff;border-left:1px solid #fff;"><span style="left:0;width:81px;top:2px;text-align:center;line-height:13px">Latch setting<br>range</span></div>
<div class="cell" style="left:378px;top:272px;width:109px;height:15px;background:#C0C0C0;border-top:1px solid #fff;border-left:1px solid #fff;"><span style="left:0;width:109px;top:0px;text-align:center">Supplemental relay</span></div>
<div class="cell" style="left:489px;top:272px;width:36px;height:15px;background:#C0C0C0;"><span style="left:0;width:36px;top:0px;text-align:center">M</span></div>
<div class="cell" style="left:527px;top:272px;width:36px;height:15px;background:#C0C0C0;"><span style="left:0;width:36px;top:0px;text-align:center">10</span></div>
<div class="cell" style="left:565px;top:272px;width:42px;height:15px;background:#C0C0C0;"><span style="right:1px;top:0px;text-align:right">3072</span></div>
<div class="cell" style="left:609px;top:272px;width:42px;height:15px;background:#C0C0C0;"><span style="right:1px;top:0px;text-align:right">0</span></div>
<div class="cell" style="left:653px;top:272px;width:42px;height:15px;background:#C0C0C0;"><span style="right:1px;top:0px;text-align:right">3071</span></div>
<div class="cell" style="left:697px;top:272px;width:42px;height:15px;background:#fff;"><span style="right:1px;top:0px;text-align:right">500</span></div>
<div class="cell" style="left:741px;top:272px;width:42px;height:15px;background:#fff;"><span style="right:1px;top:0px;text-align:right">1023</span></div>
<div class="cell" style="left:785px;top:272px;width:82px;height:15px;background:#C0C0C0;"><span style="left:0;width:82px;top:0px;text-align:center">0 - 1023</span></div>
<div class="cell" style="left:378px;top:289px;width:109px;height:15px;background:#C0C0C0;border-top:1px solid #fff;border-left:1px solid #fff;"><span style="left:0;width:109px;top:0px;text-align:center">State</span></div>
<div class="cell" style="left:489px;top:289px;width:36px;height:15px;background:#C0C0C0;"><span style="left:0;width:36px;top:0px;text-align:center">S</span></div>
<div class="cell" style="left:527px;top:289px;width:36px;height:15px;background:#C0C0C0;"><span style="left:0;width:36px;top:0px;text-align:center">10</span></div>
<div class="cell" style="left:565px;top:289px;width:42px;height:15px;background:#C0C0C0;"><span style="right:1px;top:0px;text-align:right">1000</span></div>
<div class="cell" style="left:609px;top:289px;width:42px;height:15px;background:#C0C0C0;"><span style="right:1px;top:0px;text-align:right">0</span></div>
<div class="cell" style="left:653px;top:289px;width:42px;height:15px;background:#C0C0C0;"><span style="right:1px;top:0px;text-align:right">999</span></div>
<div class="cell" style="left:697px;top:289px;width:42px;height:15px;background:#fff;"><span style="right:1px;top:0px;text-align:right">500</span></div>
<div class="cell" style="left:741px;top:289px;width:42px;height:15px;background:#fff;"><span style="right:1px;top:0px;text-align:right">999</span></div>
<div class="cell" style="left:785px;top:289px;width:82px;height:15px;background:#C0C0C0;"><span style="left:0;width:82px;top:0px;text-align:center">0 - 999</span></div>
<div class="cell" style="left:378px;top:306px;width:109px;height:15px;background:#C0C0C0;border-top:1px solid #fff;border-left:1px solid #fff;"><span style="left:0;width:109px;top:0px;text-align:center">Timer</span></div>
<div class="cell" style="left:489px;top:306px;width:36px;height:15px;background:#C0C0C0;"><span style="left:0;width:36px;top:0px;text-align:center">T</span></div>
<div class="cell" style="left:527px;top:306px;width:36px;height:15px;background:#C0C0C0;"><span style="left:0;width:36px;top:0px;text-align:center">10</span></div>
<div class="cell" style="left:565px;top:306px;width:42px;height:15px;background:#C0C0C0;"><span style="right:1px;top:0px;text-align:right">256</span></div>
<div class="cell" style="left:609px;top:306px;width:42px;height:15px;background:#C0C0C0;"><span style="right:1px;top:0px;text-align:right">0</span></div>
<div class="cell" style="left:653px;top:306px;width:42px;height:15px;background:#C0C0C0;"><span style="right:1px;top:0px;text-align:right">255</span></div>
<div class="cell" style="left:697px;top:306px;width:42px;height:15px;background:#C0C0C0;"></div>
<div class="cell" style="left:741px;top:306px;width:42px;height:15px;background:#C0C0C0;"></div>
<div class="cell" style="left:785px;top:306px;width:82px;height:15px;background:#C0C0C0;"></div>
<div class="cell" style="left:378px;top:323px;width:109px;height:15px;background:#C0C0C0;border-top:1px solid #fff;border-left:1px solid #fff;"><span style="left:0;width:109px;top:0px;text-align:center">Counter(16bit)</span></div>
<div class="cell" style="left:489px;top:323px;width:36px;height:15px;background:#C0C0C0;"><span style="left:0;width:36px;top:0px;text-align:center">C</span></div>
<div class="cell" style="left:527px;top:323px;width:36px;height:15px;background:#C0C0C0;"><span style="left:0;width:36px;top:0px;text-align:center">10</span></div>
<div class="cell" style="left:565px;top:323px;width:42px;height:15px;background:#C0C0C0;"><span style="right:1px;top:0px;text-align:right">200</span></div>
<div class="cell" style="left:609px;top:323px;width:42px;height:15px;background:#C0C0C0;"><span style="right:1px;top:0px;text-align:right">0</span></div>
<div class="cell" style="left:653px;top:323px;width:42px;height:15px;background:#C0C0C0;"><span style="right:1px;top:0px;text-align:right">199</span></div>
<div class="cell" style="left:697px;top:323px;width:42px;height:15px;background:#fff;"><span style="right:1px;top:0px;text-align:right">100</span></div>
<div class="cell" style="left:741px;top:323px;width:42px;height:15px;background:#fff;"><span style="right:1px;top:0px;text-align:right">199</span></div>
<div class="cell" style="left:785px;top:323px;width:82px;height:15px;background:#C0C0C0;"><span style="left:0;width:82px;top:0px;text-align:center">0 - 199</span></div>
<div class="cell" style="left:378px;top:340px;width:109px;height:15px;background:#C0C0C0;border-top:1px solid #fff;border-left:1px solid #fff;"><span style="left:0;width:109px;top:0px;text-align:center">Counter(32bit)</span></div>
<div class="cell" style="left:489px;top:340px;width:36px;height:15px;background:#C0C0C0;"><span style="left:0;width:36px;top:0px;text-align:center">C</span></div>
<div class="cell" style="left:527px;top:340px;width:36px;height:15px;background:#C0C0C0;"><span style="left:0;width:36px;top:0px;text-align:center">10</span></div>
<div class="cell" style="left:565px;top:340px;width:42px;height:15px;background:#C0C0C0;"><span style="right:1px;top:0px;text-align:right">56</span></div>
<div class="cell" style="left:609px;top:340px;width:42px;height:15px;background:#C0C0C0;"><span style="right:1px;top:0px;text-align:right">200</span></div>
<div class="cell" style="left:653px;top:340px;width:42px;height:15px;background:#C0C0C0;"><span style="right:1px;top:0px;text-align:right">255</span></div>
<div class="cell" style="left:697px;top:340px;width:42px;height:15px;background:#fff;"><span style="right:1px;top:0px;text-align:right">220</span></div>
<div class="cell" style="left:741px;top:340px;width:42px;height:15px;background:#fff;"><span style="right:1px;top:0px;text-align:right">255</span></div>
<div class="cell" style="left:785px;top:340px;width:82px;height:15px;background:#C0C0C0;"><span style="left:0;width:82px;top:0px;text-align:center">200 - 255</span></div>
<div class="cell" style="left:378px;top:357px;width:109px;height:15px;background:#C0C0C0;border-top:1px solid #fff;border-left:1px solid #fff;"><span style="left:0;width:109px;top:0px;text-align:center">Data register</span></div>
<div class="cell" style="left:489px;top:357px;width:36px;height:15px;background:#C0C0C0;"><span style="left:0;width:36px;top:0px;text-align:center">D</span></div>
<div class="cell" style="left:527px;top:357px;width:36px;height:15px;background:#C0C0C0;"><span style="left:0;width:36px;top:0px;text-align:center">10</span></div>
<div class="cell" style="left:565px;top:357px;width:42px;height:15px;background:#C0C0C0;"><span style="right:1px;top:0px;text-align:right">8000</span></div>
<div class="cell" style="left:609px;top:357px;width:42px;height:15px;background:#C0C0C0;"><span style="right:1px;top:0px;text-align:right">0</span></div>
<div class="cell" style="left:653px;top:357px;width:42px;height:15px;background:#C0C0C0;"><span style="right:1px;top:0px;text-align:right">7999</span></div>
<div class="cell" style="left:697px;top:357px;width:42px;height:15px;background:#fff;"><span style="right:1px;top:0px;text-align:right">200</span></div>
<div class="cell" style="left:741px;top:357px;width:42px;height:15px;background:#fff;"><span style="right:1px;top:0px;text-align:right">511</span></div>
<div class="cell" style="left:785px;top:357px;width:82px;height:15px;background:#C0C0C0;"><span style="left:0;width:82px;top:0px;text-align:center">0 - 511</span></div>
<div class="cell" style="left:378px;top:374px;width:109px;height:15px;background:#C0C0C0;border-top:1px solid #fff;border-left:1px solid #fff;"></div>
<div class="cell" style="left:489px;top:374px;width:36px;height:15px;background:#C0C0C0;"></div>
<div class="cell" style="left:527px;top:374px;width:36px;height:15px;background:#C0C0C0;"></div>
<div class="cell" style="left:565px;top:374px;width:42px;height:15px;background:#C0C0C0;"></div>
<div class="cell" style="left:609px;top:374px;width:42px;height:15px;background:#C0C0C0;"></div>
<div class="cell" style="left:653px;top:374px;width:42px;height:15px;background:#C0C0C0;"></div>
<div class="cell" style="left:697px;top:374px;width:42px;height:15px;background:#C0C0C0;"></div>
<div class="cell" style="left:741px;top:374px;width:42px;height:15px;background:#C0C0C0;"></div>
<div class="cell" style="left:785px;top:374px;width:82px;height:15px;background:#C0C0C0;"></div>
<!-- STATUS BAR -->
<div style="left:0;top:749px;width:1280px;height:21px;background:#ECE9D8;border-top:1px solid #D5D2C4"></div>
<span class="mono" style="left:2px;top:755px;font-size:12px;letter-spacing:-1.2px">PLC parameter</span>
<div class="sp" style="left:673px;width:85px"></div>
<span class="mono" style="left:674px;top:755px;font-size:12px;letter-spacing:-1.2px">FX2N(C)</span>
<div class="sp" style="left:761px;width:155px"></div>
<span class="mono" style="left:762px;top:755px;font-size:12px;letter-spacing:-1.2px">Host station</span>
<div class="sp" style="left:932px;width:97px"></div>
<div class="sp" style="left:1031px;width:75px"></div>
<div class="sp" style="left:1108px;width:57px"></div>
<div class="sp" style="left:1166px;width:31px"></div>
<div class="sp" style="left:1198px;width:25px"></div>
<div class="sp" style="left:1224px;width:25px"></div>
<div class="sp" style="left:1250px;width:30px"></div>

<!-- TASKBAR -->
<div style="left:0;top:770px;width:1280px;height:30px;background:linear-gradient(#3B77E8 0,#5A8EF2 1px,#3C7BEA 3px,#2B66DE 6px,#2760DB 20px,#2358D0 26px,#1C4AB8 30px)"></div>
<div style="left:0;top:770px;width:97px;height:30px;border-radius:0 10px 10px 0;background:linear-gradient(#3C9A3C 0,#6CC06C 2px,#46A846 5px,#3A9A3A 15px,#328E32 24px,#2A7A2A 30px)"></div>
<svg style="left:9px;top:774px" width="22" height="20"><path d="M2 3Q6 1 10 3L9 9Q5 7 1 9Z" fill="#F05020"/><path d="M11 3Q15 5 20 3L19 9Q14 11 10 9Z" fill="#60C040"/><path d="M1 10Q5 8 9 10L8 16Q4 14 0 16Z" fill="#3080F0"/><path d="M10 10Q14 12 19 10L18 16Q13 18 9 16Z" fill="#F8D020"/></svg>
<svg style="left:37px;top:774px" width="41" height="23"><g stroke="#fff" fill="none" stroke-width="1.13" stroke-linecap="square"><path transform="translate(1.0 1.0) scale(1.15) skewX(-12)" d="M2 2H14M1 8H15M5 2Q5 12 2 15M11 2V15"/><path transform="translate(19.0 1.0) scale(1.15) skewX(-12)" d="M4 1L2 9L8 12M1 5H8M6 5L2 15 M12 1L9 6H15M13 4L15 6M10 9H15V15H10Z"/></g></svg>
<!-- quick launch -->
<svg style="left:108px;top:776px" width="18" height="17"><path d="M4.5 9.5H13Q13 4.5 8.5 4.5Q4.5 4.5 4.5 9.5Q4.5 13.5 8.5 13.5Q11 13.5 12.5 11.5" fill="none" stroke="#3A9AEA" stroke-width="2.6"/><path d="M2 14Q-1 17 5 14L15 6Q18 3 14 4" fill="none" stroke="#70B8F0" stroke-width="1.2"/></svg>
<svg style="left:134px;top:776px" width="14" height="18"><path d="M1 1H11L10 11H2Z" fill="#A8D8F8" stroke="#E8F4FF"/><path d="M3 12H9L10 16H2Z" fill="#E8E0E8"/></svg>
<svg style="left:155px;top:776px" width="17" height="17"><rect x="1" y="2" width="13" height="13" rx="3" fill="#F4F8FF" stroke="#203080" stroke-width="1.3"/><path d="M5 5H9M5 5V12M7 12L12 5" stroke="#203080" stroke-width="1.6" fill="none"/></svg>
<svg style="left:181px;top:776px" width="12" height="8"><path d="M1 1L4 4L1 7M6 1L9 4L6 7" stroke="#C8D8F8" stroke-width="1.2" fill="none"/></svg>
<!-- task buttons -->
<div class="tbtn" style="left:199px"></div>
<div class="tbtn" style="left:359px"></div>
<div class="tbtn" style="left:519px"></div>
<div class="tbtn" style="left:679px"></div>
<div style="left:839px;top:774px;width:158px;height:23px;border-radius:3px;background:#1D4FC0;border-top:1px solid #133A9A;border-left:1px solid #133A9A"></div>
<svg style="left:208px;top:778px" width="17" height="16"><path d="M3 1H13L15 3V15H3Z" fill="#F0ECE0" stroke="#8080A0"/><ellipse cx="7" cy="9" rx="6" ry="3" fill="none" stroke="#2050C0" stroke-width="1.5" transform="rotate(-30 7 9)"/></svg>
<svg style="left:368px;top:778px" width="17" height="16"><path d="M3 1H13L15 3V15H3Z" fill="#F0ECE0" stroke="#8080A0"/><ellipse cx="7" cy="9" rx="6" ry="3" fill="none" stroke="#2050C0" stroke-width="1.5" transform="rotate(-30 7 9)"/></svg>
<svg style="left:528px;top:778px" width="17" height="16"><path d="M1 4H6L7 5H14V14H1Z" fill="#E8C050" stroke="#A07820"/><path d="M1 14L3 8H16L14 14Z" fill="#F8D870" stroke="#A07820"/></svg>
<svg style="left:688px;top:778px" width="16" height="16"><circle cx="8" cy="8" r="7" fill="#F0A040"/><circle cx="8" cy="8" r="4" fill="#F8E0B0"/><circle cx="3" cy="9" r="2" fill="#802010"/><circle cx="13" cy="9" r="2" fill="#802010"/></svg>
<svg style="left:848px;top:778px" width="18" height="18"><path d="M5 0.5H13L17.5 5V13L13 17.5H5L0.5 13V5Z" fill="#1A0808"/><path d="M3 4Q5 2 8 3V14Q4 15 2.5 12Z" fill="#D81818"/><path d="M9 7H15V15H9Z" fill="#E8E0D8"/><path d="M10 8H13V11H10Z" fill="#402828"/></svg>
<span class="mono tt" style="left:227px">QQ</span>
<svg style="left:238px;top:778px" width="28" height="16"><g stroke="#fff" fill="none" stroke-width="1.33" stroke-linecap="square"><path transform="translate(1.0 1.0) scale(0.75)" d="M1 4H9V15H1Z M1 9.5H9 M5 1V15 M11 2V15 M11 2H14L12.5 6L14.5 9L12 11"/><path transform="translate(13.0 1.0) scale(0.75)" d="M3 1L1 4M2 3H7M5 3V5M10 1L8 4M9 3H15M12 3V5 M1 7H7M4 6V15M4 8L1 13M4 8L7 12 M9 7H15V15H9Z M9 10H15M9 12.5H15"/></g></svg>
<span class="mono tt" style="left:269px">- Microso...</span>
<span class="mono tt" style="left:387px">FX2N PLC</span>
<svg style="left:440px;top:778px" width="40" height="16"><g stroke="#fff" fill="none" stroke-width="1.33" stroke-linecap="square"><path transform="translate(1.0 1.0) scale(0.75)" d="M2 1L3 3M7 1L6 3M1 4H8M4.5 1V8M4.5 4L1 7M4.5 4L8 7 M1 10H8M4 8L2 13L8 15M6 10L2 15 M11 1L9 6M10 4H15M14 4L10 15M10 8L15 15"/><path transform="translate(13.0 1.0) scale(0.75)" d="M1 5H5M3 1V15L1 14M1 10L5 8 M7 2H15V6H7 M7 2V10L6 15M10 6V9M7 9H15M9 11H14V15H9Z"/><path transform="translate(25.0 1.0) scale(0.75)" d="M1 5H5M3 1V15L1 14M1 10L5 8 M10 1V4M10 2H14M7 4H14V10H7ZM7 7H14M6 12H15M10.5 10V15"/></g></svg>
<span class="mono tt" style="left:478px">...</span>
<span class="mono tt" style="left:547px">E:\MOVIE</span>
<svg style="left:712px;top:778px" width="52" height="16"><g stroke="#fff" fill="none" stroke-width="1.33" stroke-linecap="square"><path transform="translate(1.0 1.0) scale(0.75)" d="M1 8H15"/><path transform="translate(13.0 1.0) scale(0.75)" d="M4 1L2 6M3 4H14M8 1V15M3 9H13M1 15H15"/><path transform="translate(25.0 1.0) scale(0.75)" d="M4 1L1 7M3 5V15 M6 3H15M13 3V15L11 14M7 6H11V11H7Z"/><path transform="translate(37.0 1.0) scale(0.75)" d="M1 4H15M8 1V15L6 14M12 1L13 3M1 7L5 10L2 14M15 7L10 10L15 14"/></g></svg>
<span class="mono tt" style="left:769px">-</span>
<svg style="left:779px;top:778px" width="28" height="16"><g stroke="#fff" fill="none" stroke-width="1.33" stroke-linecap="square"><path transform="translate(1.0 1.0) scale(0.75)" d="M12 1L3 3M1 7H15M8 3V15"/><path transform="translate(13.0 1.0) scale(0.75)" d="M12 1L3 3M1 7H15M8 3V15"/></g></svg>
<span class="mono tt" style="left:805px">...</span>
<span class="mono tt" style="left:867px">MELSOFT series G...</span>
<!-- keyboard -->
<svg style="left:1060px;top:780px" width="17" height="13"><rect x="0.5" y="3.5" width="16" height="9" fill="#fff" stroke="#404040"/><path d="M2 6H15M2 8H15M2 10H15" stroke="#606060" stroke-dasharray="1 1"/><path d="M4 1V3M8 0V3M12 1V3" stroke="#E0E0E0"/></svg>
<!-- tray -->
<div style="left:1095px;top:770px;width:185px;height:30px;background:linear-gradient(#1AA0F4 0,#38B8F8 1px,#17A4F3 4px,#0F98EE 20px,#0E8CE0 27px,#0B76C8 30px);border-left:1px solid #0A4FB0"></div>
<svg style="left:1105px;top:778px" width="18" height="16"><circle cx="5" cy="6" r="4" fill="#B03010"/><circle cx="12" cy="6" r="4" fill="#C04020"/><rect x="1" y="10" width="8" height="5" fill="#E0D0C0"/><rect x="9" y="10" width="8" height="5" fill="#80C060"/></svg>
<svg style="left:1125px;top:778px" width="16" height="16"><path d="M2 12L10 4M5 3H12V10" stroke="#1010D0" stroke-width="4" fill="none"/><path d="M2 12L10 4M6 3.5H11.5V9" stroke="#fff" stroke-width="1.8" fill="none"/></svg>
<svg style="left:1143px;top:777px" width="15" height="17"><path d="M3 2L12 11L10 13L1 4Z" fill="#B0B0B8" stroke="#404040"/><path d="M10 13L13 16" stroke="#3060C0" stroke-width="2"/></svg>
<svg style="left:1160px;top:777px" width="16" height="17"><circle cx="7" cy="7" r="6" fill="#9090A0"/><circle cx="7" cy="7" r="3" fill="#503020"/><path d="M8 15L15 10" stroke="#A0C0E0"/></svg>
<svg style="left:1178px;top:778px" width="17" height="16"><path d="M1 7Q8 -2 16 7Z" fill="#30C040"/><path d="M8.5 6V14Q8 16 6 15" stroke="#20506A" stroke-width="1.5" fill="none"/></svg>
<svg style="left:1196px;top:777px" width="17" height="17"><circle cx="8" cy="8" r="7" fill="#4090E0" stroke="#E0F0FF" stroke-width="1.5"/><path d="M4 10L11 4" stroke="#fff"/><rect x="9" y="10" width="6" height="6" fill="#F0A030"/></svg>
<svg style="left:1215px;top:777px" width="15" height="17"><path d="M1 1H14V10Q14 15 7.5 16Q1 15 1 10Z" fill="#1050B0" stroke="#D0E8FF"/><path d="M3 4H12M3 7H12M3 10H12M4 13H11" stroke="#60D0F0" stroke-width="1.3"/></svg>
<span style="left:1237px;top:778px;font-size:12px;color:#fff;letter-spacing:0.3px">19:34</span>
</body></html>
